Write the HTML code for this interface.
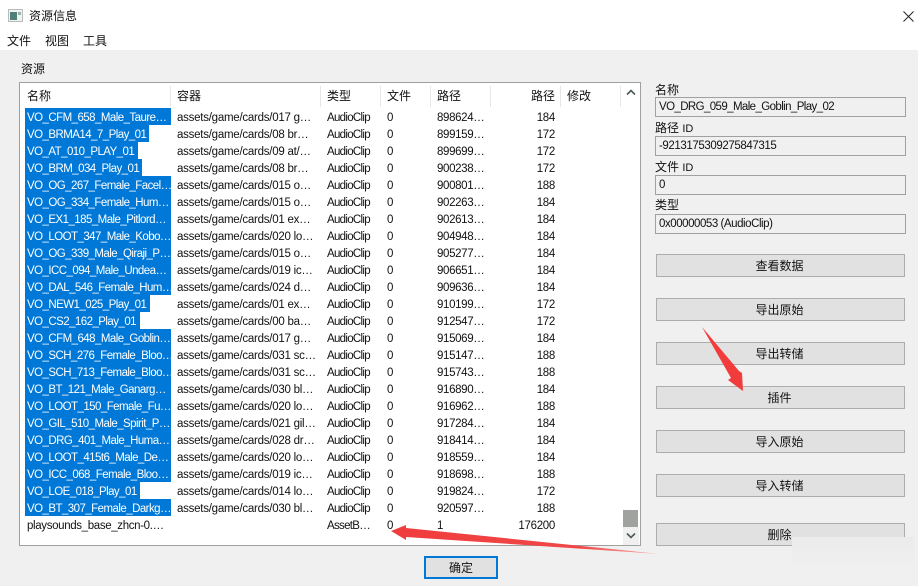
<!DOCTYPE html>
<html lang="zh"><head><meta charset="utf-8"><title>资源信息</title>
<style>
html,body{margin:0;padding:0;width:918px;height:586px;overflow:hidden;background:#fff}
body{position:relative;font:12px/17px "Liberation Sans","Noto Sans CJK SC",sans-serif;color:#111}
.a{position:absolute;white-space:nowrap}
#main{left:0;top:50px;width:918px;height:536px;background:#f0f0f0}
#box{left:19px;top:82px;width:620px;height:462px;background:#fff;border:1px solid #a0a0a0}
.s{top:86px;width:1px;height:21px;background:#e6e6e6}
.h{top:88px}
#rows{left:0;top:108px;width:640px}
.r{position:relative;height:17px;width:640px;font-size:11.5px;line-height:20px}
.r span{position:absolute;top:0;white-space:nowrap}
.r .n{left:25px;padding-left:2px;background:#0078d7;color:#fff;height:17px;width:144px;overflow:hidden;letter-spacing:-.55px}
.r .p{left:27px;letter-spacing:-.35px}
.r .c{left:177px;letter-spacing:-.25px}.r .t{left:327px;letter-spacing:-.7px}.r .f{left:387px}.r .o{left:437px;letter-spacing:-.35px}
.r .z{right:85px;letter-spacing:-.3px}
.fld{left:655px;width:249px;height:18px;border:1px solid #a0a0a0;background:#f0f0f0;line-height:19px;text-indent:3px;font-size:11.5px}
.btn{left:656px;width:247px;height:21px;border:1px solid #adadad;background:#e1e1e1;text-align:center;line-height:23px;text-indent:-2px}
</style></head><body>
<svg class="a" style="left:8px;top:9px" width="16" height="14" viewBox="0 0 16 14"><rect x=".5" y=".5" width="14" height="12" fill="#eef2f0" stroke="#b8bcba"/><rect x="2" y="3" width="7" height="8" fill="#4f7f78"/><rect x="10" y="3" width="3" height="3" fill="#9fb0ac"/></svg>
<div class="a" style="left:29px;top:8px">资源信息</div>
<svg class="a" style="left:903px;top:11px" width="11" height="11" viewBox="0 0 11 11"><path d="M.5.5L10.5 10.5M10.5.5L.5 10.5" stroke="#222" fill="none"/></svg>
<div class="a" style="left:7px;top:33px">文件</div>
<div class="a" style="left:45px;top:33px">视图</div>
<div class="a" style="left:83px;top:33px">工具</div>
<div class="a" id="main"></div>
<div class="a" style="left:21px;top:61px">资源</div>
<div class="a" id="box"></div>
<div class="a s" style="left:170px"></div><div class="a s" style="left:320px"></div><div class="a s" style="left:380px"></div><div class="a s" style="left:430px"></div><div class="a s" style="left:490px"></div><div class="a s" style="left:560px"></div><div class="a s" style="left:620px"></div>
<div class="a h" style="left:27px">名称</div><div class="a h" style="left:177px">容器</div><div class="a h" style="left:327px">类型</div><div class="a h" style="left:387px">文件</div><div class="a h" style="left:437px">路径</div><div class="a h" style="left:531px">路径</div><div class="a h" style="left:567px">修改</div>
<div class="a" id="rows">
<div class="r"><span class="n">VO_CFM_658_Male_Taure…</span><span class="c">assets/game/cards/017 g…</span><span class="t">AudioClip</span><span class="f">0</span><span class="o">898624…</span><span class="z">184</span></div>
<div class="r"><span class="n" style="width:122px">VO_BRMA14_7_Play_01</span><span class="c">assets/game/cards/08 br…</span><span class="t">AudioClip</span><span class="f">0</span><span class="o">899159…</span><span class="z">172</span></div>
<div class="r"><span class="n" style="width:111px">VO_AT_010_PLAY_01</span><span class="c">assets/game/cards/09 at/…</span><span class="t">AudioClip</span><span class="f">0</span><span class="o">899699…</span><span class="z">172</span></div>
<div class="r"><span class="n" style="width:115px">VO_BRM_034_Play_01</span><span class="c">assets/game/cards/08 br…</span><span class="t">AudioClip</span><span class="f">0</span><span class="o">900238…</span><span class="z">172</span></div>
<div class="r"><span class="n">VO_OG_267_Female_Facel…</span><span class="c">assets/game/cards/015 o…</span><span class="t">AudioClip</span><span class="f">0</span><span class="o">900801…</span><span class="z">188</span></div>
<div class="r"><span class="n">VO_OG_334_Female_Hum…</span><span class="c">assets/game/cards/015 o…</span><span class="t">AudioClip</span><span class="f">0</span><span class="o">902263…</span><span class="z">184</span></div>
<div class="r"><span class="n">VO_EX1_185_Male_Pitlord…</span><span class="c">assets/game/cards/01 ex…</span><span class="t">AudioClip</span><span class="f">0</span><span class="o">902613…</span><span class="z">184</span></div>
<div class="r"><span class="n">VO_LOOT_347_Male_Kobo…</span><span class="c">assets/game/cards/020 lo…</span><span class="t">AudioClip</span><span class="f">0</span><span class="o">904948…</span><span class="z">184</span></div>
<div class="r"><span class="n">VO_OG_339_Male_Qiraji_P…</span><span class="c">assets/game/cards/015 o…</span><span class="t">AudioClip</span><span class="f">0</span><span class="o">905277…</span><span class="z">184</span></div>
<div class="r"><span class="n">VO_ICC_094_Male_Undea…</span><span class="c">assets/game/cards/019 ic…</span><span class="t">AudioClip</span><span class="f">0</span><span class="o">906651…</span><span class="z">184</span></div>
<div class="r"><span class="n">VO_DAL_546_Female_Hum…</span><span class="c">assets/game/cards/024 d…</span><span class="t">AudioClip</span><span class="f">0</span><span class="o">909636…</span><span class="z">184</span></div>
<div class="r"><span class="n" style="width:123px">VO_NEW1_025_Play_01</span><span class="c">assets/game/cards/01 ex…</span><span class="t">AudioClip</span><span class="f">0</span><span class="o">910199…</span><span class="z">172</span></div>
<div class="r"><span class="n" style="width:113px">VO_CS2_162_Play_01</span><span class="c">assets/game/cards/00 ba…</span><span class="t">AudioClip</span><span class="f">0</span><span class="o">912547…</span><span class="z">172</span></div>
<div class="r"><span class="n">VO_CFM_648_Male_Goblin…</span><span class="c">assets/game/cards/017 g…</span><span class="t">AudioClip</span><span class="f">0</span><span class="o">915069…</span><span class="z">184</span></div>
<div class="r"><span class="n">VO_SCH_276_Female_Bloo…</span><span class="c">assets/game/cards/031 sc…</span><span class="t">AudioClip</span><span class="f">0</span><span class="o">915147…</span><span class="z">188</span></div>
<div class="r"><span class="n">VO_SCH_713_Female_Bloo…</span><span class="c">assets/game/cards/031 sc…</span><span class="t">AudioClip</span><span class="f">0</span><span class="o">915743…</span><span class="z">188</span></div>
<div class="r"><span class="n">VO_BT_121_Male_Ganarg…</span><span class="c">assets/game/cards/030 bl…</span><span class="t">AudioClip</span><span class="f">0</span><span class="o">916890…</span><span class="z">184</span></div>
<div class="r"><span class="n">VO_LOOT_150_Female_Fu…</span><span class="c">assets/game/cards/020 lo…</span><span class="t">AudioClip</span><span class="f">0</span><span class="o">916962…</span><span class="z">188</span></div>
<div class="r"><span class="n">VO_GIL_510_Male_Spirit_P…</span><span class="c">assets/game/cards/021 gil…</span><span class="t">AudioClip</span><span class="f">0</span><span class="o">917284…</span><span class="z">184</span></div>
<div class="r"><span class="n">VO_DRG_401_Male_Huma…</span><span class="c">assets/game/cards/028 dr…</span><span class="t">AudioClip</span><span class="f">0</span><span class="o">918414…</span><span class="z">184</span></div>
<div class="r"><span class="n">VO_LOOT_415t6_Male_De…</span><span class="c">assets/game/cards/020 lo…</span><span class="t">AudioClip</span><span class="f">0</span><span class="o">918559…</span><span class="z">184</span></div>
<div class="r"><span class="n">VO_ICC_068_Female_Bloo…</span><span class="c">assets/game/cards/019 ic…</span><span class="t">AudioClip</span><span class="f">0</span><span class="o">918698…</span><span class="z">188</span></div>
<div class="r"><span class="n" style="width:113px">VO_LOE_018_Play_01</span><span class="c">assets/game/cards/014 lo…</span><span class="t">AudioClip</span><span class="f">0</span><span class="o">919824…</span><span class="z">172</span></div>
<div class="r"><span class="n">VO_BT_307_Female_Darkg…</span><span class="c">assets/game/cards/030 bl…</span><span class="t">AudioClip</span><span class="f">0</span><span class="o">920597…</span><span class="z">188</span></div>
<div class="r"><span class="p">playsounds_base_zhcn-0.…</span><span class="t">AssetB…</span><span class="f">0</span><span class="o">1</span><span class="z">176200</span></div>
</div>
<div class="a" style="left:623px;top:527px;width:16px;height:18px;background:#f0f0f0"></div>
<div class="a" style="left:623px;top:510px;width:15px;height:17px;background:#a0a2a0"></div>
<svg class="a" style="left:623px;top:88px" width="16" height="9" viewBox="0 0 16 9"><path d="M4 6.5L8 2.5L12 6.5" stroke="#4a5a58" stroke-width="1.6" fill="none"/></svg>
<svg class="a" style="left:623px;top:531px" width="16" height="9" viewBox="0 0 16 9"><path d="M4 2.5L8 6.5L12 2.5" stroke="#4a5a58" stroke-width="1.6" fill="none"/></svg>
<div class="a" style="left:655px;top:82px">名称</div>
<div class="a fld" style="top:97px;letter-spacing:-.6px">VO_DRG_059_Male_Goblin_Play_02</div>
<div class="a" style="left:655px;top:120px">路径 <span style="font-size:11px">ID</span></div>
<div class="a fld" style="top:136px;letter-spacing:-.4px">-9213175309275847315</div>
<div class="a" style="left:655px;top:159px">文件 <span style="font-size:11px">ID</span></div>
<div class="a fld" style="top:175px">0</div>
<div class="a" style="left:655px;top:197px">类型</div>
<div class="a fld" style="top:214px;letter-spacing:-.45px">0x00000053 (AudioClip)</div>
<div class="a btn" style="top:254px">查看数据</div>
<div class="a btn" style="top:298px">导出原始</div>
<div class="a btn" style="top:342px">导出转储</div>
<div class="a btn" style="top:386px">插件</div>
<div class="a btn" style="top:430px">导入原始</div>
<div class="a btn" style="top:474px">导入转储</div>
<div class="a btn" style="top:523px">删除</div>
<div class="a" style="left:424px;top:556px;width:70px;height:19px;border:2px solid #0078d7;background:#e1e1e1;text-align:center;line-height:21px">确定</div>
<div class="a" style="left:792px;top:537px;width:123px;height:49px;background:linear-gradient(#ebebeb,#f0f0f0 70%)"></div>
<svg class="a" style="left:0;top:0" width="918" height="586" viewBox="0 0 918 586">
<defs><linearGradient id="g" gradientUnits="userSpaceOnUse" x1="391" y1="531" x2="660" y2="554"><stop offset="0" stop-color="#f03c3c"/><stop offset=".7" stop-color="#f04848"/><stop offset="1" stop-color="#f8b0b0"/></linearGradient></defs>
<polygon points="702,327 739,371 742,373 743,391 728,380 731,378" fill="#f23c3c"/>
<polygon points="391,531 406,525 406,528 660,554 406,537 406,540" fill="url(#g)"/>
</svg>
</body></html>
